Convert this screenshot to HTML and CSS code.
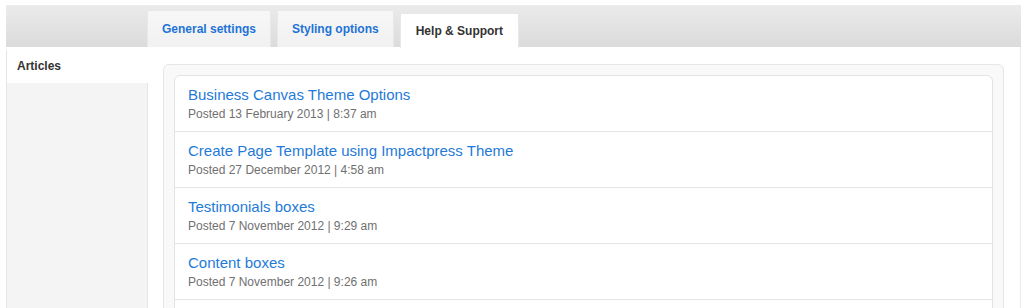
FILE: index.html
```html
<!DOCTYPE html>
<html lang="en">
<head>
  <meta charset="UTF-8">
  <meta name="viewport" content="width=device-width, initial-scale=1.0">
  <title>Theme Options - Help &amp; Support</title>
  <link rel="stylesheet" href="styles.css">
</head>
<body>
  <div class="wrap">
    <div class="tab-bar">
      <a href="#general" class="tab">General settings</a>
      <a href="#styling" class="tab">Styling options</a>
      <a href="#help" class="tab tab-active">Help &amp; Support</a>
    </div>
    <div class="panel">
      <div class="sidebar">
        <a href="#articles" class="side-item">Articles</a>
        <div class="side-fill"></div>
      </div>
      <div class="content">
        <div class="postbox">
          <ul class="article-list">
            <li class="article">
              <a href="#" class="article-title">Business Canvas Theme Options</a>
              <div class="article-meta">Posted 13 February 2013 | 8:37 am</div>
            </li>
            <li class="article">
              <a href="#" class="article-title">Create Page Template using Impactpress Theme</a>
              <div class="article-meta">Posted 27 December 2012 | 4:58 am</div>
            </li>
            <li class="article">
              <a href="#" class="article-title">Testimonials boxes</a>
              <div class="article-meta">Posted 7 November 2012 | 9:29 am</div>
            </li>
            <li class="article">
              <a href="#" class="article-title">Content boxes</a>
              <div class="article-meta">Posted 7 November 2012 | 9:26 am</div>
            </li>
          </ul>
        </div>
      </div>
    </div>
  </div>
</body>
</html>
```

FILE: styles.css
```css
body {
  margin: 0;
  font-family: 'Liberation Sans', Arial, sans-serif;
  background-color: #fff;
  color: #333;
}
a {
  text-decoration: none;
}
.wrap {
  margin: 5px 11px 0 6px;
}
.tab-bar {
  display: flex;
  align-items: flex-end;
  gap: 6px;
  height: 42px;
  padding-left: 141px;
  background: linear-gradient(to bottom, #ebebeb, #dbdbdb);
}
.tab {
  display: block;
  height: 36px;
  line-height: 36px;
  padding: 0 14px;
  font-size: 12px;
  font-weight: bold;
  color: #1e73d6;
  background: linear-gradient(to bottom, #f7f7f7, #f1f1f1);
  border: 1px solid #e8e8e8;
  border-bottom: none;
}
.tab-active {
  height: 34px;
  line-height: 34px;
  padding: 0 15px;
  margin-bottom: -1px;
  color: #333;
  background: #fff;
  position: relative;
}
.panel {
  display: flex;
}
.sidebar {
  display: flex;
  flex-direction: column;
  width: 141px;
  margin-top: 3px;
  border-left: 1px solid #e6e6e6;
}
.side-item {
  display: block;
  padding: 8px 10px;
  line-height: 17px;
  font-size: 12px;
  font-weight: bold;
  color: #333;
  background: #fff;
}
.side-fill {
  flex: 1;
  background: #f4f4f4;
  border-right: 1px solid #e6e6e6;
}
.content {
  flex: 1;
  padding: 17px 16px 40px 15px;
  border-right: 1px solid #ebebeb;
}
.postbox {
  padding: 10px;
  background: #f9f9f9;
  border: 1px solid #e6e6e6;
  border-radius: 6px;
}
.article-list {
  list-style: none;
  margin: 0;
  padding: 0 0 40px;
  background: #fff;
  border: 1px solid #e3e3e3;
  border-radius: 6px;
}
.article {
  padding: 9px 13px 8px;
  border-bottom: 1px solid #e5e5e5;
}
.article-title {
  display: block;
  font-size: 15px;
  line-height: 20px;
  color: #1f7ad8;
}
.article-meta {
  font-size: 12px;
  line-height: 18px;
  color: #707070;
}
```
